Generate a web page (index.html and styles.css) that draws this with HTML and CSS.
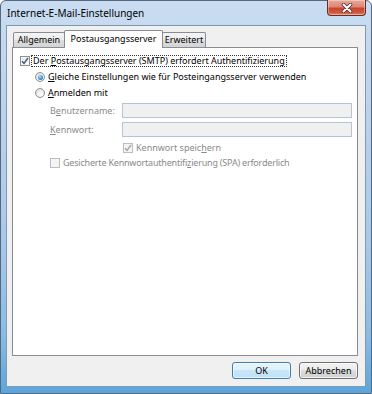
FILE: index.html
```html
<!DOCTYPE html>
<html lang="de">
<head>
<meta charset="utf-8">
<link rel="stylesheet" href="styles.css">
</head>
<body>
<div class="window">
  <div class="titlebar">
    <span class="title">Internet-E-Mail-Einstellungen</span>
    <div class="close">
      <svg width="12" height="10" viewBox="0 0 12 10">
        <path d="M2.5 1.5 L9.5 8.5 M9.5 1.5 L2.5 8.5" stroke="#4a3030" stroke-width="3.6" stroke-linecap="round"/>
        <path d="M2.5 1.5 L9.5 8.5 M9.5 1.5 L2.5 8.5" stroke="#ffffff" stroke-width="2" stroke-linecap="round"/>
      </svg>
    </div>
  </div>
  <div class="client">
    <div class="tabs">
      <div class="tab tab-general">Allgemein</div>
      <div class="tab tab-active">Postausgangsserver</div>
      <div class="tab tab-adv">Erweitert</div>
    </div>
    <div class="panel">
      <div class="row row-main">
        <span class="cb"><svg class="check" width="8" height="8" viewBox="0 0 8 8"><path d="M1 4.2 L3 6.4 L7 1" fill="none" stroke="#44577e" stroke-width="1.5"/></svg></span>
        <span class="focus">Der <u>P</u>ostausgangsserver (SMTP) erfordert Authentifizierung</span>
      </div>
      <div class="row row-radio">
        <span class="radio on"><span class="dot"></span></span>
        <span class="lbl"><u>G</u>leiche Einstellungen wie für Posteingangsserver verwenden</span>
      </div>
      <div class="row row-radio">
        <span class="radio"></span>
        <span class="lbl"><u>A</u>nmelden mit</span>
      </div>
      <div class="field field-user">
        <span class="flabel">B<u>e</u>nutzername:</span>
        <span class="input"></span>
      </div>
      <div class="field field-pass">
        <span class="flabel"><u>K</u>ennwort:</span>
        <span class="input"></span>
      </div>
      <div class="row row-save">
        <span class="cb disabled"><svg class="check" width="8" height="8" viewBox="0 0 8 8"><path d="M1 4.2 L3 6.4 L7 1" fill="none" stroke="#a8a8a8" stroke-width="1.5"/></svg></span>
        <span class="lbl dim">Kennwort speic<u>h</u>ern</span>
      </div>
      <div class="row row-spa">
        <span class="cb disabled"></span>
        <span class="lbl dim tight">Gesicherte Kennwortauthentifi<u>z</u>ierung (SPA) erforderlich</span>
      </div>
    </div>
    <div class="buttons">
      <div class="btn btn-default">OK</div>
      <div class="btn">Abbrechen</div>
    </div>
  </div>
</div>
</body>
</html>
```
FILE: styles.css
```css
html, body {
  margin: 0;
  padding: 0;
  background: #ffffff;
}
body {
  font-family: "Segoe UI", "Noto Sans", "Open Sans", sans-serif;
  font-size: 9px;
  color: #000;
}
u { text-decoration: underline; text-underline-offset: 1px; }

.window {
  width: 372px;
  height: 394px;
  box-sizing: border-box;
  border: 1px solid #56687c;
  border-radius: 6px 6px 0 0;
  background: linear-gradient(to bottom, #c9dcf1 0%, #b9d2ed 30%, #a9c9ea 60%, #8abbe5 85%, #5aa6dc 100%);
  display: flex;
  flex-direction: column;
  padding: 0 5px 6px 5px;
}

.titlebar {
  height: 24px;
  display: flex;
  justify-content: space-between;
  align-items: flex-start;
}
.title {
  padding: 6px 0 0 1px;
  font-size: 10px;
  color: #000;
  line-height: 13px;
}
.close {
  width: 39px;
  height: 16px;
  margin-top: -1px;
  box-sizing: border-box;
  border: 1px solid #6b2b24;
  border-top: none;
  border-radius: 0 0 4px 4px;
  background: linear-gradient(to bottom, #e8a899 0%, #dc8776 45%, #c8452f 55%, #d05a3f 85%, #e28a66 100%);
  display: flex;
  align-items: center;
  justify-content: center;
  box-shadow: inset 0 0 0 1px rgba(255,255,255,0.35);
}

.client {
  flex: 1;
  background: #f0f0f0;
  border: 1px solid #8298ae;
  display: flex;
  flex-direction: column;
  padding: 4px 7px 7px 5px;
}

.tabs {
  display: flex;
  align-items: flex-end;
  height: 18px;
  margin-bottom: -1px;
  padding-left: 1px;
  position: relative;
  z-index: 1;
}
.tab {
  box-sizing: border-box;
  height: 15px;
  border: 1px solid #898c95;
  border-bottom: none;
  background: linear-gradient(to bottom, #f4f4f4 0%, #ececec 50%, #dedede 50%, #d4d4d4 100%);
  border-radius: 2px 2px 0 0;
  display: flex;
  align-items: center;
  justify-content: center;
  line-height: 12px;
  margin-bottom: 1px;
}
.tab-general { width: 52px; margin-right: -1px; }
.tab-active {
  width: 99px;
  height: 18px;
  background: #ffffff;
  margin-bottom: 0;
  padding-bottom: 2px;
  margin-right: -1px;
}
.tab-adv { width: 44px; border-left: 1px solid #898c95; }

.panel {
  flex: 1;
  background: #ffffff;
  border: 1px solid #898c95;
  display: flex;
  flex-direction: column;
  padding-top: 5px;
}

.row {
  display: flex;
  align-items: center;
  height: 16px;
}
.row-main { padding-left: 7px; }
.row-radio { padding-left: 22px; }
.row-save { padding-left: 110px; height: 15px; margin-top: 3px; }
.row-spa { padding-left: 37px; height: 15px; }

.cb {
  width: 10px;
  height: 10px;
  box-sizing: border-box;
  border: 1px solid #8e8f8f;
  background: linear-gradient(135deg, #dcdcdc 0%, #f4f4f4 60%, #ffffff 100%);
  box-shadow: inset 0 0 0 1px #f6f6f6;
  display: flex;
  align-items: center;
  justify-content: center;
  flex: none;
}
.cb.disabled {
  border-color: #bdbdbd;
  background: #f4f4f4;
  box-shadow: none;
}
.check { display: block; }

.focus {
  margin-left: 1px;
  padding: 0 1px;
  border: 1px dotted #333;
  line-height: 10px;
}

.radio {
  width: 10px;
  height: 10px;
  box-sizing: border-box;
  border-radius: 50%;
  border: 1px solid #8e8f8f;
  background: radial-gradient(circle at 65% 70%, #ffffff 0%, #e8e8e8 60%, #d4d4d4 100%);
  display: flex;
  align-items: center;
  justify-content: center;
  flex: none;
}
.radio.on .dot {
  width: 5px;
  height: 5px;
  border-radius: 50%;
  background: radial-gradient(circle at 40% 35%, #b6e2fb 0%, #3d8fd0 55%, #1d4f94 100%);
}

.lbl { margin-left: 3px; line-height: 12px; }
.dim { color: #8a8a8a; }
.tight { letter-spacing: -0.2px; }

.field {
  display: flex;
  align-items: center;
  padding-left: 37px;
  height: 15px;
}
.field-user { margin-top: 2px; }
.field-pass { margin-top: 4px; }
.flabel {
  width: 72px;
  color: #8a8a8a;
  line-height: 12px;
}
.input {
  width: 230px;
  height: 15px;
  box-sizing: border-box;
  border: 1px solid #b6c3d2;
  background: #f0f0f0;
}

.buttons {
  display: flex;
  justify-content: flex-end;
  gap: 8px;
  margin-top: 6px;
  height: 17px;
}
.btn {
  width: 59px;
  height: 17px;
  box-sizing: border-box;
  border: 1px solid #707070;
  border-radius: 3px;
  background: linear-gradient(to bottom, #f2f2f2 0%, #ebebeb 50%, #dddddd 50%, #cfcfcf 100%);
  box-shadow: inset 0 0 0 1px rgba(255,255,255,0.7);
  display: flex;
  align-items: center;
  justify-content: center;
  line-height: 12px;
}
.btn-default {
  border-color: #3c7fb1;
  background: linear-gradient(to bottom, #e8f5fc 0%, #dcf0fb 50%, #c8e6f8 50%, #bde0f6 100%);
  box-shadow: inset 0 0 0 1px rgba(255,255,255,0.6);
}
```
